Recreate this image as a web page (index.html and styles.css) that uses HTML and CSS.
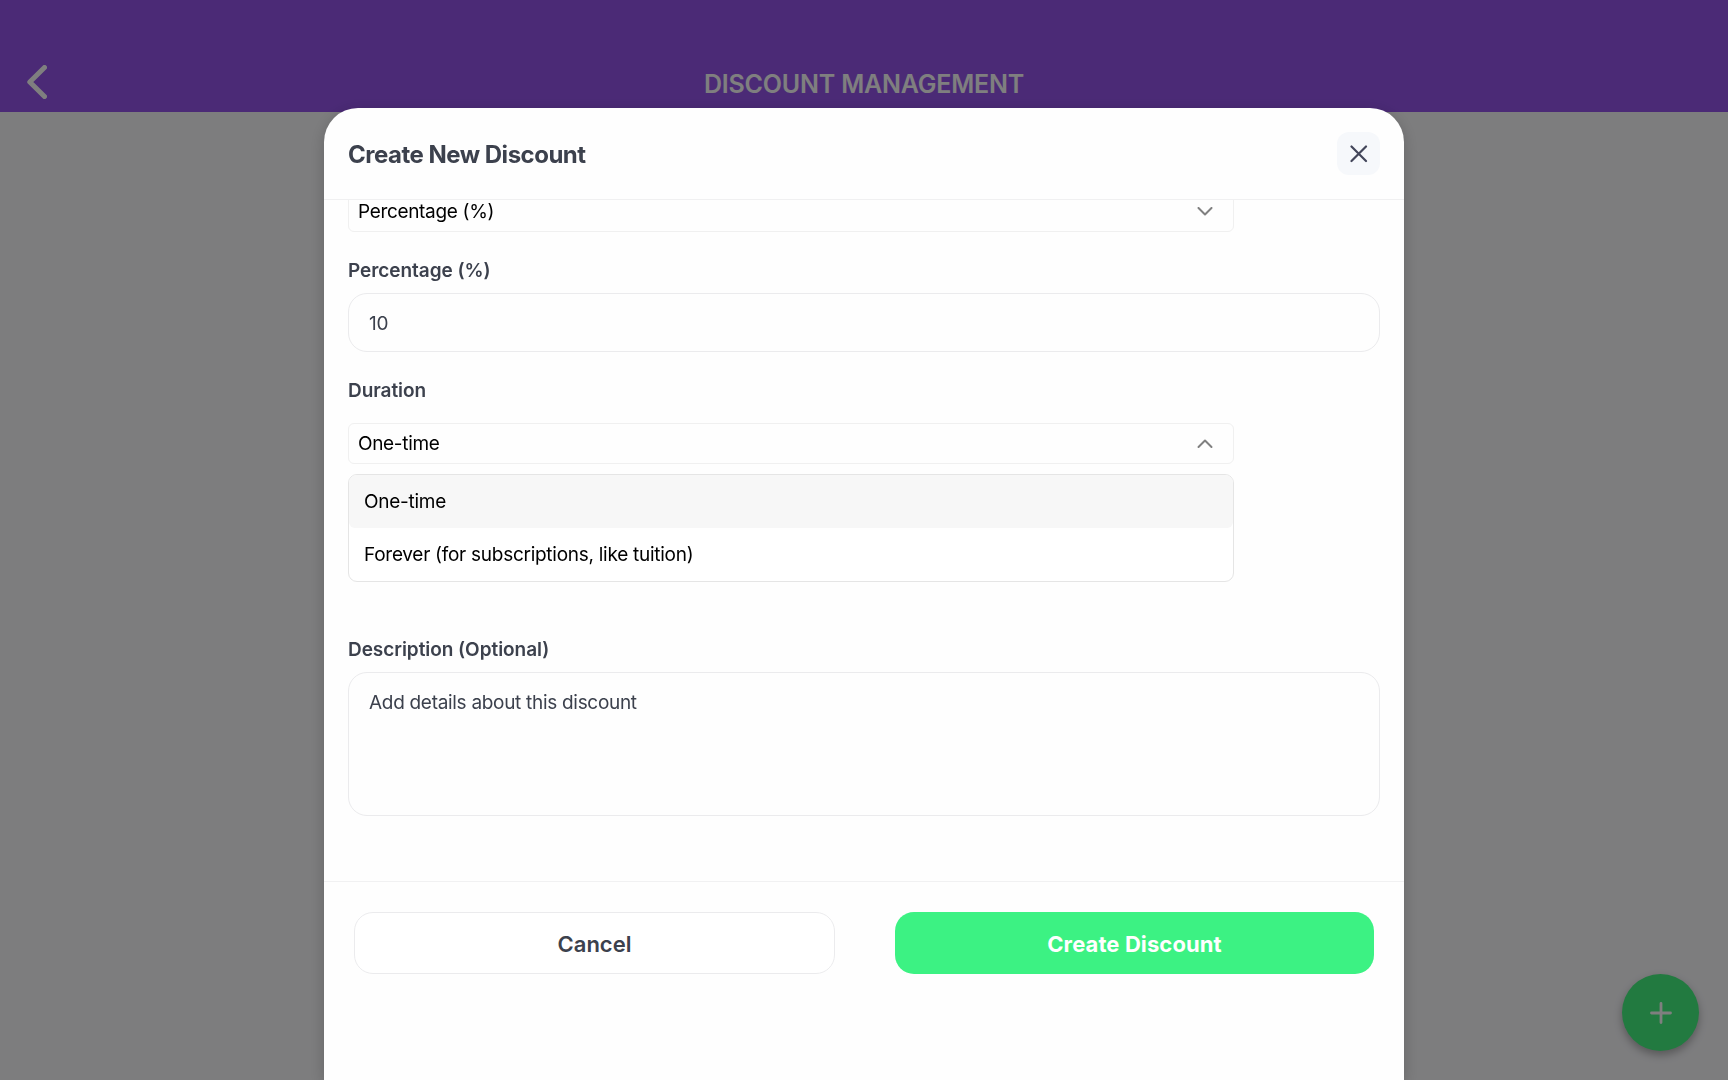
FILE: index.html
```html
<!DOCTYPE html>
<html lang="en">
<head>
    <meta charset="UTF-8">
    <meta name="viewport" content="width=device-width, initial-scale=1.0">
    <title>Discount Management</title>
    <link rel="stylesheet" href="styles.css">
</head>
<body>
    <div class="top-bar">
        <svg class="back-icon" viewBox="0 0 20 34"><path d="M17.5 2.5L2.8 17l14.7 14.5"/></svg>
        <div class="page-title">DISCOUNT MANAGEMENT</div>
    </div>
    <button class="fab">
        <svg viewBox="0 0 22 22"><path d="M11 1.5v19M1.5 11h19"/></svg>
    </button>

    <div class="overlay">
        <div class="modal">
            <div class="modal-header">
                <div class="modal-title">Create New Discount</div>
                <button class="close-button">
                    <svg viewBox="0 0 18 18"><path d="M1.5 1.5l14.5 14.5M16 1.5L1.5 16"/></svg>
                </button>
            </div>

            <div class="modal-body">
                <div class="select select-type">
                    <span>Percentage (%)</span>
                    <svg class="chevron" viewBox="0 0 16 10"><path d="M1.5 1L8 7.5 14.5 1"/></svg>
                </div>
                <div class="label label-percentage">Percentage (%)</div>
                <div class="input">10</div>
                <div class="label label-duration">Duration</div>
                <div class="select select-duration">
                    <span>One-time</span>
                    <svg class="chevron" viewBox="0 0 16 10"><path d="M1.5 8L8 1.5 14.5 8"/></svg>
                    <div class="dropdown">
                        <div class="option selected">One-time</div>
                        <div class="option">Forever (for subscriptions, like tuition)</div>
                    </div>
                </div>
                <div class="label label-description">Description (Optional)</div>
                <div class="input textarea">Add details about this discount</div>
            </div>

            <div class="modal-footer">
                <button class="button cancel">Cancel</button>
                <button class="button create">Create Discount</button>
            </div>
        </div>
    </div>
</body>
</html>
```
FILE: styles.css
```css
* {
    box-sizing: border-box;
}

html, body {
    height: 100%;
    margin: 0;
    overflow: hidden;
    font-family: Inter, 'Liberation Sans', sans-serif;
    background-color: #fafafd;
}

button {
    font-family: inherit;
    border: none;
    padding: 0;
}

svg {
    display: block;
    fill: none;
    stroke: currentColor;
    stroke-linecap: round;
    stroke-linejoin: round;
}

.top-bar {
    display: flex;
    align-items: flex-start;
    height: 112px;
    padding: 65px 27px 0;
    background-color: #9655ec;
    color: white;
}

.back-icon {
    width: 20px;
    height: 34px;
    stroke-width: 5;
}

.page-title {
    flex: 1;
    margin-right: 20px;
    padding-top: 4px;
    text-align: center;
    font-size: 25px;
    line-height: 30px;
    font-weight: 600;
    letter-spacing: -0.2px;
}

.fab {
    position: fixed;
    right: 29px;
    bottom: 29px;
    width: 77px;
    height: 77px;
    display: flex;
    align-items: center;
    justify-content: center;
    border-radius: 50%;
    background-color: #44f480;
    color: white;
    box-shadow: 0 4px 8px rgba(0, 0, 0, 0.3);
}

.fab svg {
    width: 22px;
    height: 22px;
    stroke-width: 2.8;
}

/* Dark layer over the page, holds the sheet */
.overlay {
    position: fixed;
    inset: 0;
    display: flex;
    justify-content: center;
    padding-top: 108px;
    background-color: rgba(0, 0, 0, 0.5);
}

.modal {
    width: 1080px;
    display: flex;
    flex-direction: column;
    border-radius: 34px 34px 0 0;
    background-color: #fefefe;
    box-shadow: 0 4px 16px rgba(0, 0, 0, 0.2);
    color: #3c414d;
}

.modal-header {
    display: flex;
    align-items: center;
    justify-content: space-between;
    height: 92px;
    padding: 0 24px;
    border-bottom: 1px solid #f0f0f1;
}

.modal-title {
    padding-top: 2px;
    font-size: 24px;
    font-weight: 700;
    letter-spacing: -0.5px;
}

.close-button {
    width: 43px;
    height: 43px;
    display: flex;
    align-items: center;
    justify-content: center;
    border-radius: 12px;
    background-color: #f6f8fb;
    color: #43465a;
}

.close-button svg {
    width: 18px;
    height: 18px;
    stroke-width: 2.2;
}

.modal-body {
    height: 682px;
    padding: 0 24px;
    overflow: hidden;
    border-bottom: 1px solid #f1f1f2;
}

.select {
    position: relative;
    display: flex;
    align-items: center;
    justify-content: space-between;
    width: 886px;
    height: 41px;
    padding: 0 20px 0 9px;
    border: 1px solid #f0f0f0;
    border-radius: 6px;
    color: #000;
    font-size: 19px;
    letter-spacing: -0.33px;
}

/* scrolled partly under the header */
.select-type {
    margin-top: -9px;
}

.chevron {
    width: 16px;
    height: 10px;
    stroke-width: 2;
    color: #808080;
}

.label {
    font-size: 19px;
    line-height: 24px;
    font-weight: 600;
    letter-spacing: -0.05px;
}

.label-percentage {
    margin: 27px 0 10px;
}

.label-duration {
    margin: 27px 0 20px;
}

.label-description {
    margin: 174px 0 10px;
}

.input {
    height: 59px;
    padding: 18px 20px 16px;
    border: 1px solid #ebebed;
    border-radius: 19px;
    font-size: 19px;
    line-height: 24px;
    letter-spacing: -0.3px;
}

.textarea {
    height: 144px;
}

.dropdown {
    position: absolute;
    top: 50px;
    left: -1px;
    width: 886px;
    height: 108px;
    border: 1px solid #e5e5e5;
    border-radius: 9px;
    background-color: #fff;
    overflow: hidden;
}

.option {
    display: flex;
    align-items: center;
    height: 53px;
    padding-left: 15px;
    border-radius: 6px;
    letter-spacing: -0.27px;
}

.option.selected {
    background-color: #f7f7f7;
}

.modal-footer {
    display: flex;
    gap: 60px;
    padding: 30px;
}

.button {
    flex: 1;
    height: 62px;
    padding-top: 2px;
    border-radius: 19px;
    font-size: 22px;
    font-weight: 600;
}

.cancel {
    border: 1px solid #ebebed;
    background-color: #fff;
    color: #3c414d;
    padding-bottom: 1px;
}

.create {
    background-color: #3cf283;
    color: white;
    font-weight: 700;
    letter-spacing: 0.1px;
}
```
